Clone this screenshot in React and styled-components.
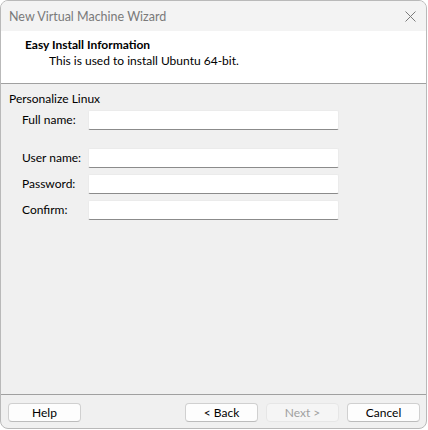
import styled, { createGlobalStyle } from 'styled-components';

const GlobalStyle = createGlobalStyle`
  html, body {
    margin: 0;
    padding: 0;
    background: #ffffff;
  }
  * {
    box-sizing: border-box;
  }
`;

const fields = [
  { label: 'Full name:', type: 'text', spaced: true },
  { label: 'User name:', type: 'text' },
  { label: 'Password:', type: 'password' },
  { label: 'Confirm:', type: 'password' },
];

export default function App() {
  return (
    <>
      <GlobalStyle />
      <Window>
        <TitleBar>
          <Title>New Virtual Machine Wizard</Title>
          <CloseButton aria-label="Close">
            <svg width="11" height="11" viewBox="0 0 11 11">
              <path d="M0.5 0.5 L10.5 10.5 M10.5 0.5 L0.5 10.5" stroke="#7a7a7a" strokeWidth="1" fill="none" />
            </svg>
          </CloseButton>
        </TitleBar>
        <Header>
          <HeaderTitle>Easy Install Information</HeaderTitle>
          <HeaderText>This is used to install Ubuntu 64-bit.</HeaderText>
        </Header>
        <Body>
          <GroupLabel>Personalize Linux</GroupLabel>
          <Form>
            {fields.map(f => (
              <Row key={f.label} spaced={f.spaced}>
                <Label>{f.label}</Label>
                <Input type={f.type} />
              </Row>
            ))}
          </Form>
        </Body>
        <Footer>
          <Button>Help</Button>
          <Spacer />
          <Button>&lt; Back</Button>
          <Button disabled>Next &gt;</Button>
          <Button>Cancel</Button>
        </Footer>
      </Window>
    </>
  );
}

const Window = styled.div`
  width: 427px;
  height: 429px;
  display: flex;
  flex-direction: column;
  border: 1px solid #b9b9b9;
  border-radius: 8px;
  overflow: hidden;
  background: #f0f0f0;
  font-family: Lato, "Noto Sans", sans-serif;
  font-size: 12px;
  color: #000;
`;

const TitleBar = styled.div`
  height: 30px;
  display: flex;
  align-items: center;
  justify-content: space-between;
  padding: 0 10px 0 8px;
  background: #f3f3f3;
`;

const Title = styled.span`
  color: #7a7a7a;
  font-size: 12.5px;
`;

const CloseButton = styled.div`
  display: flex;
  align-items: center;
`;

const Header = styled.div`
  height: 53px;
  background: #ffffff;
  border-bottom: 1px solid #a0a0a0;
  padding: 6px 0 0 24px;
  display: flex;
  flex-direction: column;
`;

const HeaderTitle = styled.div`
  font-weight: 700;
  line-height: 16px;
`;

const HeaderText = styled.div`
  padding-left: 24px;
  line-height: 16px;
`;

const Body = styled.div`
  flex: 1;
  padding: 7px 0 0 8px;
`;

const GroupLabel = styled.div`
  line-height: 16px;
`;

const Form = styled.div`
  display: flex;
  flex-direction: column;
  gap: 6px;
  padding: 3px 0 0 13px;
`;

const Row = styled.div`
  display: flex;
  align-items: center;
  margin-bottom: ${({ spaced }) => (spaced ? '12px' : '0')};
`;

const Label = styled.label`
  width: 66px;
  line-height: 16px;
`;

const Input = styled.input`
  width: 251px;
  height: 20px;
  margin: 0;
  background: #ffffff;
  border: 1px solid #ebebeb;
  border-bottom: 1px solid #8b8b8b;
  border-radius: 2px;
  outline: none;
  padding: 0 4px;
  font: inherit;
`;

const Footer = styled.div`
  height: 34px;
  border-top: 1px solid #a0a0a0;
  display: flex;
  align-items: flex-start;
  gap: 8px;
  padding: 8px 0 0 7px;
`;

const Spacer = styled.div`
  width: 88px;
`;

const Button = styled.button`
  width: 73px;
  height: 19px;
  padding: 0;
  font: inherit;
  line-height: 16px;
  color: ${({ disabled }) => (disabled ? '#a0a0a0' : '#000')};
  background: ${({ disabled }) => (disabled ? '#f5f5f5' : '#fdfdfd')};
  border: 1px solid ${({ disabled }) => (disabled ? '#e6e6e6' : '#d0d0d0')};
  border-bottom-color: ${({ disabled }) => (disabled ? '#e6e6e6' : '#bcbcbc')};
  border-radius: 4px;
`;
